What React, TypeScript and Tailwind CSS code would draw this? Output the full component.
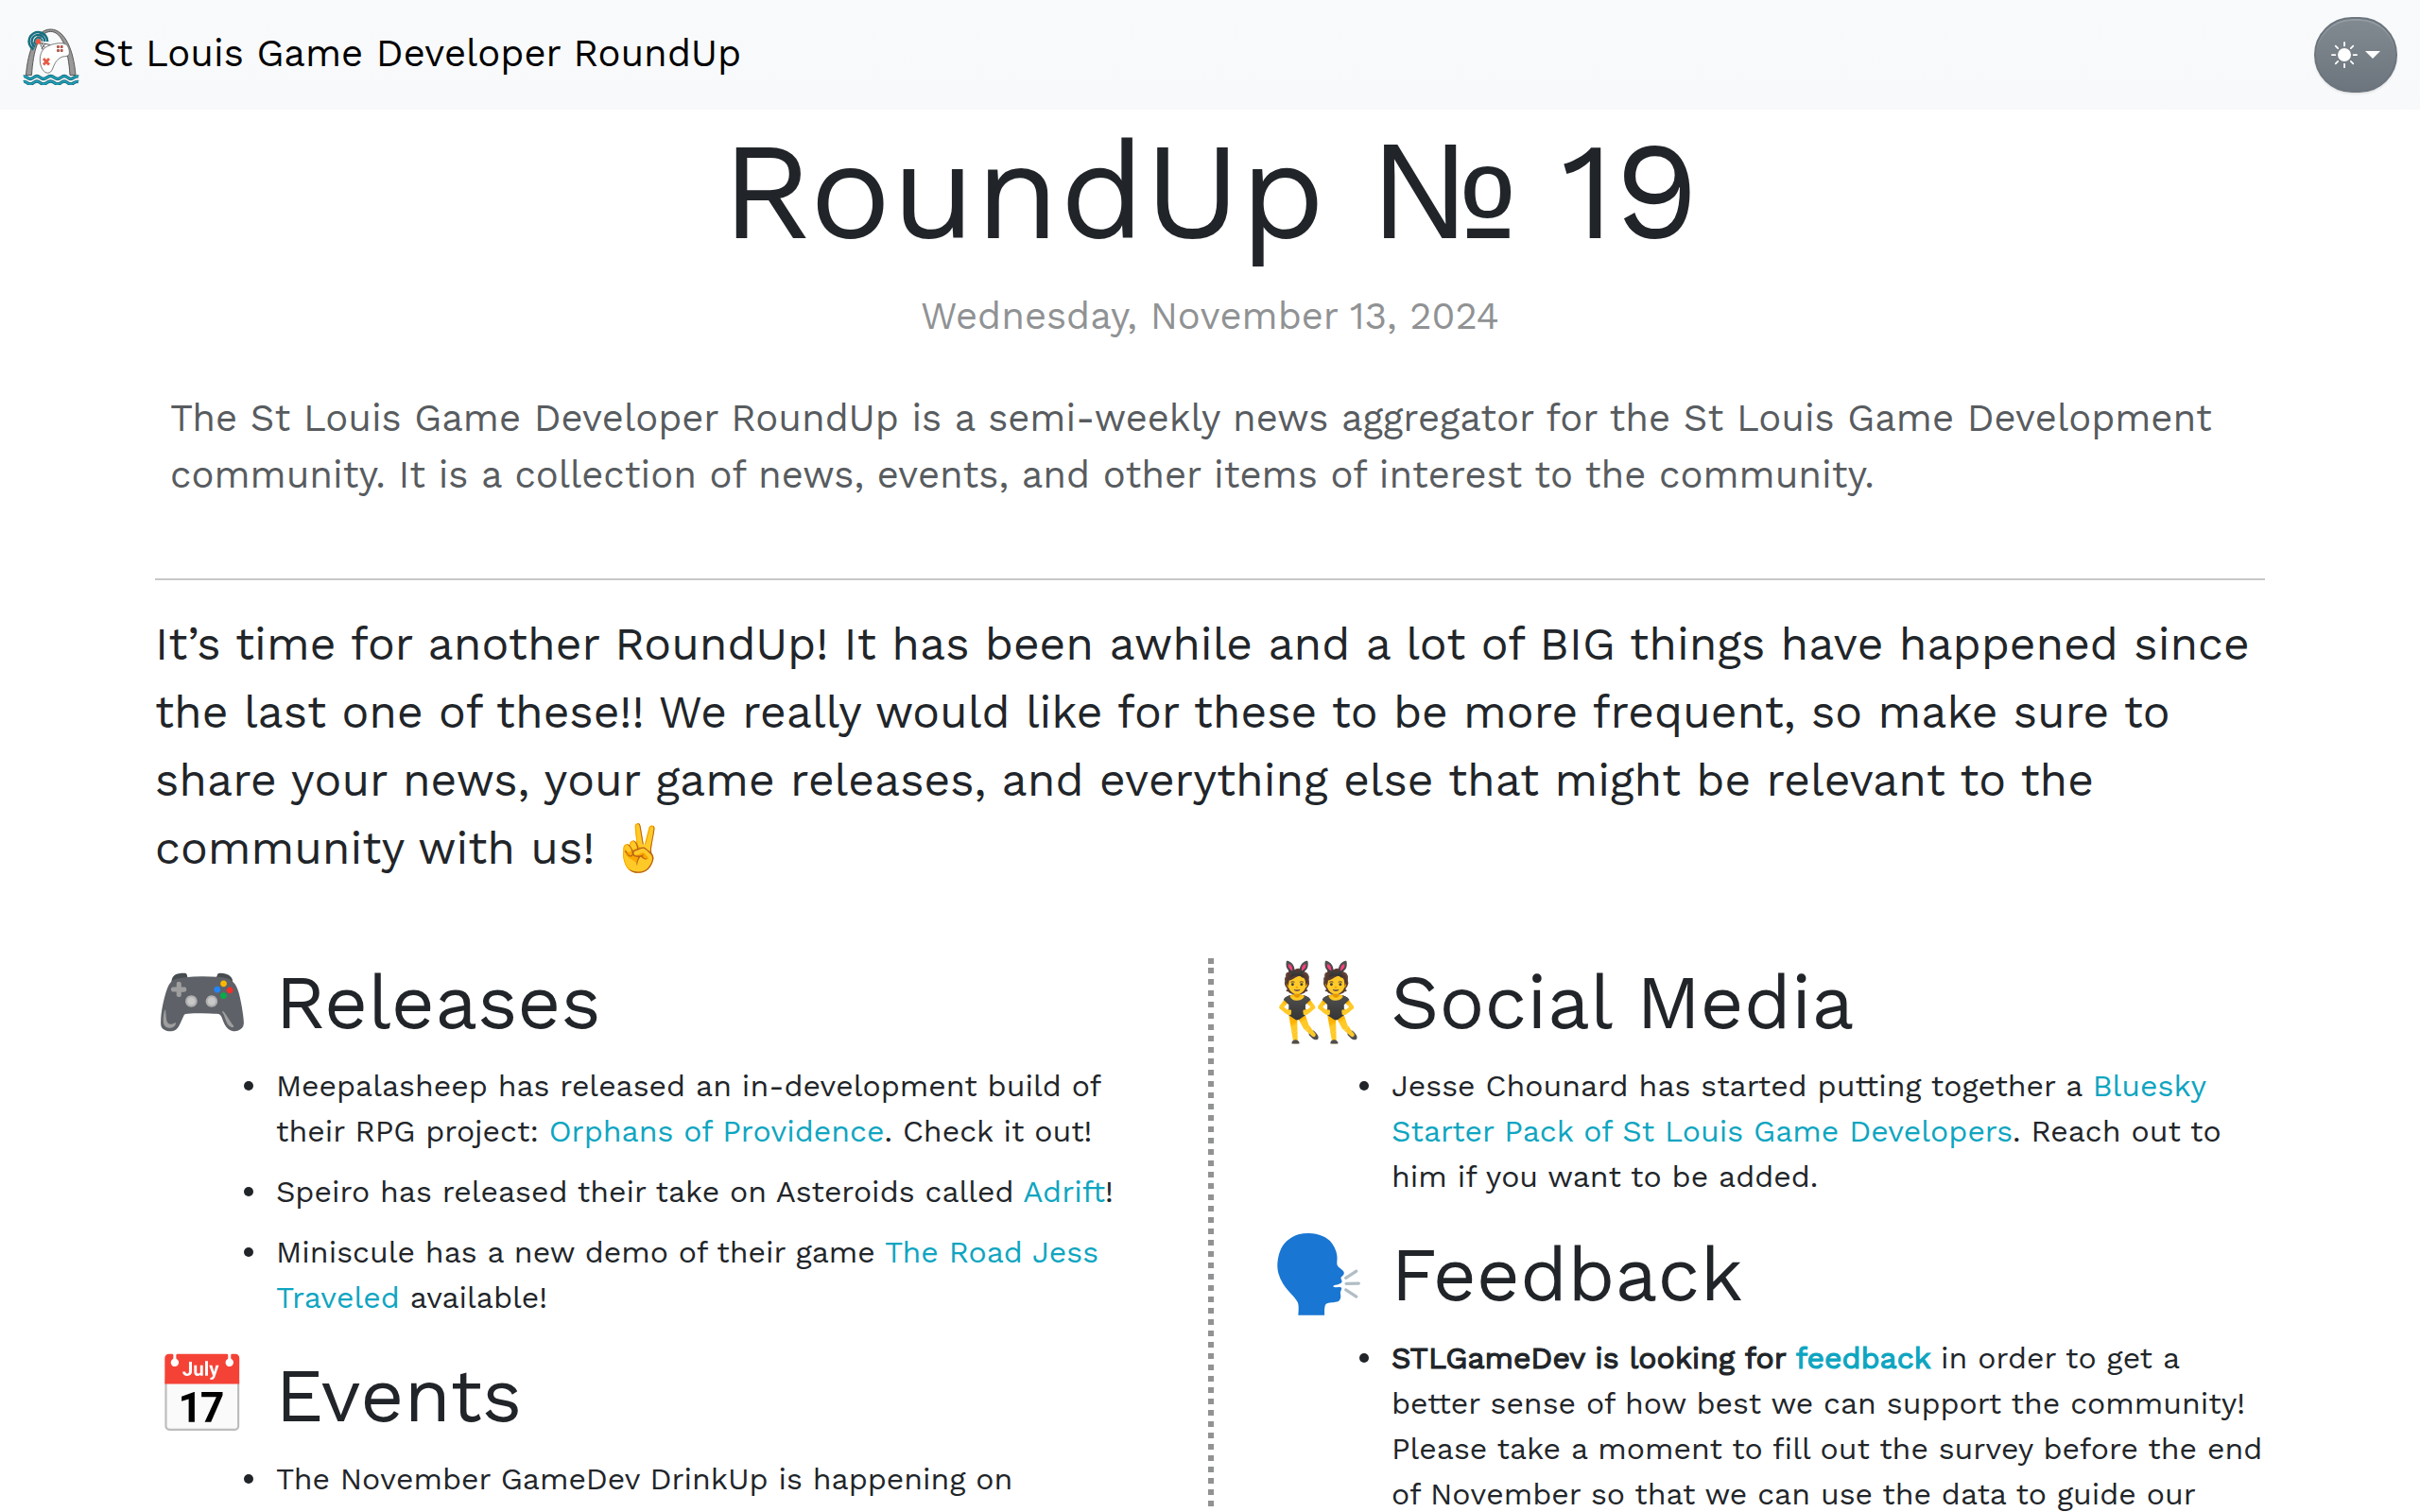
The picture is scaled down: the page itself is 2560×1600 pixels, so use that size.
import type { ReactNode } from "react";
import { BsSunFill } from "react-icons/bs";

function Logo() {
  return (
    <svg viewBox="0 0 60 60" className="size-[60px] shrink-0" fill="none">
      <path
        d="M3.500 49.500C5.500 24 14 1 29.500 1S54 24 56 49.500H50C48.500 24 42 3.400 29.500 3.400S11 24 9.500 49.500Z"
        fill="#999"
        stroke="#4c4c4c"
        strokeWidth="0.9"
      />
      <path d="M18 15L29 17.500L22 24Z M20 16L25 22M24 16L20 22" stroke="#4a4a4a" strokeWidth="0.9" fill="#fff" />
      <g stroke="#176f80" strokeWidth="2.500">
        <path d="M11.500 22.300A9.800 9.800 0 1 1 26.200 14" />
        <path d="M13 19.600A6.800 6.800 0 1 1 23.200 14" />
        <path d="M14.400 17.200A4 4 0 1 1 20.500 14" strokeWidth="1.600" />
      </g>
      <path
        d="M22 22C27 16.500 40 14.500 45 16.500C49 18.500 50 25 49 28C47 30.500 42 29 40 31C35 34 33.500 38 31.500 43C29.500 48.500 24 48.500 21 43.500C17 37 17.500 27 22 22Z"
        fill="#fff"
        stroke="#6c6c6c"
        strokeWidth="0.9"
      />
      <circle cx="16.500" cy="14" r="2.700" fill="#f0563f" />
      <path d="M22 32L28 38.500M28 32L22 38.500" stroke="#e85a46" strokeWidth="2.800" />
      <path
        d="M36.500 18.500h2v2h-2zM40.200 18.500h2v2h-2zM36.500 22.500h2v2h-2zM40.200 22.500h2v2h-2z"
        fill="#e85a46"
        stroke="#8a3a2e"
        strokeWidth="0.7"
      />
      <g stroke="#14606f" strokeWidth="3.400">
        <path d="M1 51C4 50 5 53.500 8 53.500S12 50.500 15 50.500S19 53.500 22 53.500S26 50.500 29.500 50.500S34 53.500 37 53.500S41 50.500 44 50.500S48 53.500 51 53.500S55 50 59 51" />
        <path d="M1 56.500C4 55.500 5 59 8 59S12 56 15 56S19 59 22 59S26 56 29.500 56S34 59 37 59S41 56 44 56S48 59 51 59S55 55.500 59 56.500" />
      </g>
      <g stroke="#1e9fb8" strokeWidth="2">
        <path d="M1 51C4 50 5 53.500 8 53.500S12 50.500 15 50.500S19 53.500 22 53.500S26 50.500 29.500 50.500S34 53.500 37 53.500S41 50.500 44 50.500S48 53.500 51 53.500S55 50 59 51" />
        <path d="M1 56.500C4 55.500 5 59 8 59S12 56 15 56S19 59 22 59S26 56 29.500 56S34 59 37 59S41 56 44 56S48 59 51 59S55 55.500 59 56.500" />
      </g>
    </svg>
  );
}

function Link({ children }: { children: ReactNode }) {
  return <a className="text-[#0ea5c1]">{children}</a>;
}

function Item({ children }: { children: ReactNode }) {
  return (
    <li className="mb-4 flex gap-6">
      <span className="mt-[19px] size-[10px] shrink-0 rounded-full bg-[#212529]" />
      <p>{children}</p>
    </li>
  );
}

function Section({ icon, title, children }: { icon: string; title: string; children: ReactNode }) {
  return (
    <section className="pb-4">
      <h2 className="mb-4 h-24 text-[80px] leading-[96px] whitespace-nowrap">
        {icon} {title}
      </h2>
      <ul className="pl-[94px] leading-[48px]">{children}</ul>
    </section>
  );
}

function DottedRule() {
  return (
    <div className="ml-px flex w-[6px] flex-col gap-1 pt-px">
      <div className="h-[6px] bg-[#909294]" />
      <div className="flex-1 bg-[repeating-linear-gradient(to_bottom,#909294_0_6px,transparent_6px_12px)]" />
    </div>
  );
}

export default function App() {
  return (
    <div className="h-[1600px] overflow-hidden bg-white font-['Work_Sans','Inter',sans-serif] text-[32px] text-[#212529]">
      <nav className="flex h-[116px] items-center justify-between bg-linear-to-b from-[#f9fafb] to-[#f8f9fa] px-6">
        <div className="flex items-center gap-[14px] text-[40px] leading-[60px] text-black">
          <div className="pt-[3px]">
            <Logo />
          </div>
          <span className="-mt-[2px]">St Louis Game Developer RoundUp</span>
        </div>
        <button className="flex h-20 w-[88px] items-center justify-center gap-2 rounded-full border-2 border-[#6c757d] bg-linear-to-b from-[#828a91] to-[#6c757d] text-white shadow-[inset_0_2px_0_rgba(255,255,255,0.15),0_2px_2px_rgba(0,0,0,0.075)]">
          <BsSunFill className="size-7" />
          <span className="border-x-8 border-t-8 border-x-transparent border-t-white" />
        </button>
      </nav>

      <main className="px-[164px]">
        <header className="text-center">
          <h1 className="h-[173px] text-[144px] leading-[173px]">
            RoundUp <span className="font-['Liberation_Sans']">№</span> 19
          </h1>
          <p className="mt-4 text-[40px] leading-[60px] text-[#909294]">Wednesday, November 13, 2024</p>
        </header>
        <p className="mt-12 px-4 text-[40px] leading-[60px] text-[#585c5f]">
          The St Louis Game Developer RoundUp is a semi-weekly news aggregator for the St Louis Game Development
          community. It is a collection of news, events, and other items of interest to the community.
        </p>
        <hr className="mt-[79px] border-t-2 border-[#c7c8c9]" />
        <p className="mt-8 h-72 text-[48px] leading-[72px]">
          It’s time for another RoundUp! It has been awhile and a lot of BIG things have happened since the last one of
          these!! We really would like for these to be more frequent, so make sure to share your news, your game
          releases, and everything else that might be relevant to the community with us! ✌️
        </p>

        <div className="mt-[79px] grid grid-cols-[1052px_6px_1052px] justify-between">
          <div>
            <Section icon="🎮" title="Releases">
              <Item>
                Meepalasheep has released an in-development build of their RPG project:{" "}
                <Link>Orphans of Providence</Link>. Check it out!
              </Item>
              <Item>
                Speiro has released their take on Asteroids called <Link>Adrift</Link>!
              </Item>
              <Item>
                Miniscule has a new demo of their game <Link>The Road Jess Traveled</Link> available!
              </Item>
            </Section>
            <Section icon="📅" title="Events">
              <Item>The November GameDev DrinkUp is happening on</Item>
            </Section>
          </div>
          <DottedRule />
          <div>
            <Section icon="👯" title="Social Media">
              <Item>
                Jesse Chounard has started putting together a{" "}
                <Link>Bluesky Starter Pack of St Louis Game Developers</Link>. Reach out to him if you want to be added.
              </Item>
            </Section>
            <Section icon="🗣️" title="Feedback">
              <Item>
                <span className="[-webkit-text-stroke:1.2px_currentColor]">
                  STLGameDev is looking for <Link>feedback</Link>
                </span>{" "}
                in order to get a better sense of how best we can support the community! Please take a moment to fill
                out the survey before the end of November so that we can use the data to guide our
              </Item>
            </Section>
          </div>
        </div>
      </main>
    </div>
  );
}
